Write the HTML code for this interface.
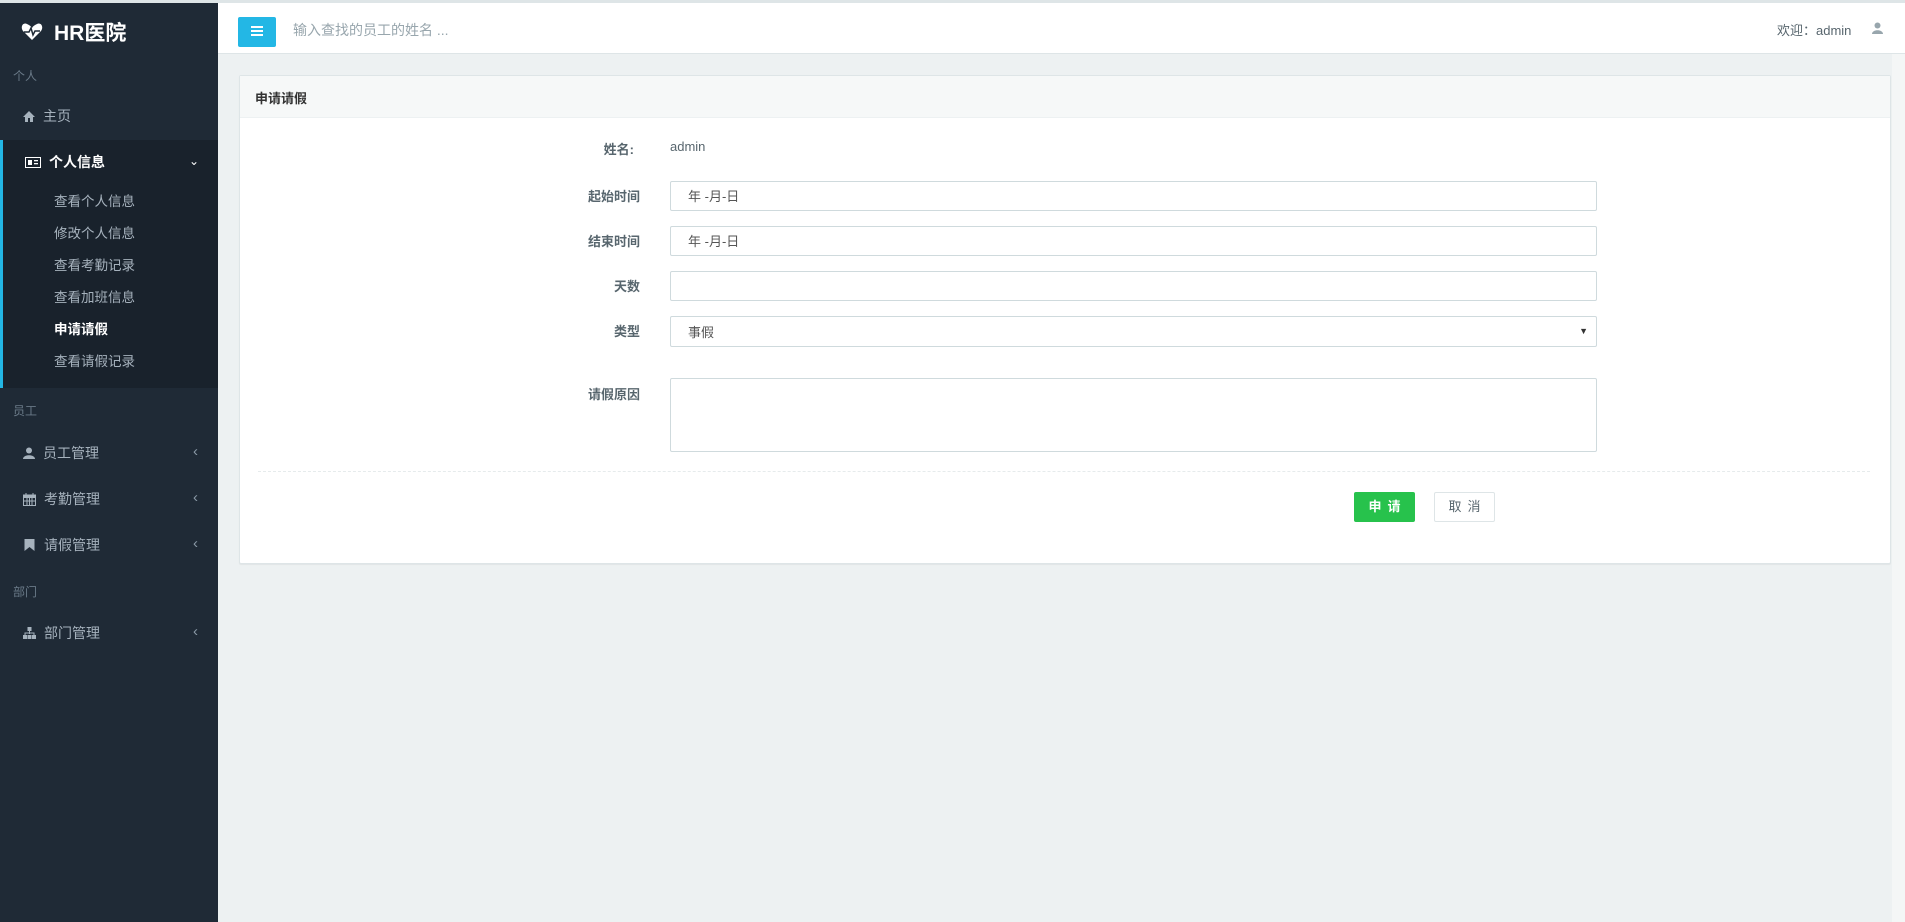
<!DOCTYPE html>
<html><head><meta charset="utf-8"><style>
*{box-sizing:border-box;margin:0;padding:0}
body{width:1905px;height:922px;overflow:hidden;background:#edf1f2;font-family:"Liberation Sans","Noto Sans CJK SC",sans-serif;font-size:13px;color:#58666e;position:relative}
.abs{position:absolute}
#topline{left:0;top:0;width:1905px;height:3px;background:#dee5e7}
#side{left:0;top:3px;width:218px;height:919px;background:#1f2a36}
#hdr{left:218px;top:3px;width:1687px;height:51px;background:#fff;border-bottom:1px solid #dee5e7}
.nl{left:13px;font-size:12px;color:#6a7a88}
.it{left:23px;color:#a6b2bd;font-size:14px;display:flex;align-items:center}
.it svg{margin-right:8px}
.chev{left:193px;color:#8a99a6;font-size:15px}
.sub{left:54px;color:#a6b2bd;font-size:13.5px}
.lbl{width:200px;text-align:right;left:440px;font-size:13px;color:#58666e}
.inp{left:670px;width:927px;height:30px;border:1px solid #cfdadd;background:#fff;border-radius:2px;font-size:13px;color:#555;padding:4px 17px}
</style></head><body>
<div class="abs" id="topline"></div>
<div class="abs" id="side">
 <div class="abs" style="left:21px;top:14px;display:flex;align-items:center;color:#fff;font-weight:bold;font-size:21px">
  <svg width="22" height="18" viewBox="0 0 22 18"><path d="M11 17 L2 8 C-1 4 2 -1 6 1 C8 2 10 3 11 5 C12 3 14 2 16 1 C20 -1 23 4 20 8 Z" fill="#fff"/><path d="M3 9 L8 9 L10 5 L12 12 L14 8 L19 8" stroke="#1f2a36" stroke-width="1.5" fill="none"/></svg>
  <span style="margin-left:11px">HR医院</span></div>
 <div class="abs nl" style="top:64px">个人</div>
 <div class="abs it" style="top:103px"><svg width="12" height="11" viewBox="0 0 12 11"><path d="M6 0 L12 6 L10 6 L10 11 L7 11 L7 7 L5 7 L5 11 L2 11 L2 6 L0 6Z" fill="#a6b2bd"/></svg>主页</div>
 <div class="abs" style="left:0;top:137px;width:218px;height:248px;background:#19222c;border-left:3px solid #23b7e5"></div>
 <div class="abs it" style="top:149px;left:25px;color:#fff;font-weight:bold"><svg width="16" height="11" viewBox="0 0 16 11"><rect x="0.5" y="0.5" width="15" height="10" fill="none" stroke="#fff"/><rect x="3" y="3" width="4" height="5" fill="#fff"/><rect x="9" y="3" width="4" height="1.3" fill="#fff"/><rect x="9" y="6" width="4" height="1.3" fill="#fff"/></svg>个人信息</div>
 <div class="abs" style="left:189px;top:151px;color:#fff;font-size:12px">&#8964;</div>
 <div class="abs sub" style="top:187px">查看个人信息</div>
 <div class="abs sub" style="top:219px">修改个人信息</div>
 <div class="abs sub" style="top:251px">查看考勤记录</div>
 <div class="abs sub" style="top:283px">查看加班信息</div>
 <div class="abs sub" style="top:315px;color:#fff;font-weight:bold">申请请假</div>
 <div class="abs sub" style="top:347px">查看请假记录</div>
 <div class="abs nl" style="top:399px">员工</div>
 <div class="abs it" style="top:440px"><svg width="12" height="12" viewBox="0 0 12 12"><circle cx="6" cy="3.5" r="3" fill="#a6b2bd"/><path d="M0 12 C0 7 12 7 12 12Z" fill="#a6b2bd"/></svg>员工管理</div>
 <div class="abs chev" style="top:440px">&#8249;</div>
 <div class="abs it" style="top:486px"><svg width="13" height="13" viewBox="0 0 13 13"><rect x="0.5" y="2" width="12" height="10.5" fill="none" stroke="#a6b2bd"/><rect x="0.5" y="2" width="12" height="3" fill="#a6b2bd"/><path d="M3 0v3M10 0v3M4 5v7M6.5 5v7M9 5v7M1 8h11" stroke="#a6b2bd"/></svg>考勤管理</div>
 <div class="abs chev" style="top:486px">&#8249;</div>
 <div class="abs it" style="top:532px"><svg width="13" height="12" viewBox="0 0 10 12"><path d="M0 0H10V12L5 8L0 12Z" fill="#a6b2bd"/></svg>请假管理</div>
 <div class="abs chev" style="top:532px">&#8249;</div>
 <div class="abs nl" style="top:580px">部门</div>
 <div class="abs it" style="top:620px"><svg width="13" height="12" viewBox="0 0 13 12"><rect x="4.5" y="0" width="4" height="4" fill="#a6b2bd"/><path d="M6.5 4v3M2 8V6h9v2" stroke="#a6b2bd" fill="none"/><rect x="0" y="8" width="4" height="4" fill="#a6b2bd"/><rect x="4.5" y="8" width="4" height="4" fill="#a6b2bd"/><rect x="9" y="8" width="4" height="4" fill="#a6b2bd"/></svg>部门管理</div>
 <div class="abs chev" style="top:620px">&#8249;</div>
</div>
<div class="abs" id="hdr">
 <div class="abs" style="left:20px;top:14px;width:38px;height:30px;background:#23b7e5;border-radius:2px"><div class="abs" style="left:13px;top:9px;width:12px;height:2px;background:#fff;box-shadow:0 4px 0 #fff,0 8px 0 #fff"></div></div>
 <div class="abs" style="left:75px;top:17px;font-size:14px;color:#98a6ad">输入查找的员工的姓名 ...</div>
 <div class="abs" style="left:1559px;top:17px;font-size:13px;color:#58666e">欢迎：admin</div>
 <svg class="abs" style="left:1654px;top:19px" width="11" height="12" viewBox="0 0 11 12"><circle cx="5.5" cy="3.5" r="3" fill="#98a6ad"/><path d="M0 12 C0 7 11 7 11 12Z" fill="#98a6ad"/></svg>
</div>
<div class="abs" style="left:1892px;top:54px;width:13px;height:868px;background:#f4f6f6"></div>
<div class="abs" style="left:239px;top:75px;width:1652px;height:489px;background:#fff;border:1px solid #dee5e7;border-radius:2px;box-shadow:0 1px 1px rgba(0,0,0,.05)">
 <div style="height:42px;background:#f6f8f8;border-bottom:1px solid #edf1f2;padding:12px 15px;font-weight:bold;color:#333;font-size:13px">申请请假</div>
</div>
<div class="abs lbl" style="top:139px;font-weight:bold;width:194px">姓名:</div>
<div class="abs" style="left:670px;top:139px;color:#58666e">admin</div>
<div class="abs lbl" style="top:186px;font-weight:bold">起始时间</div>
<div class="abs inp" style="top:181px">年 -月-日</div>
<div class="abs lbl" style="top:231px;font-weight:bold">结束时间</div>
<div class="abs inp" style="top:226px">年 -月-日</div>
<div class="abs lbl" style="top:276px;font-weight:bold">天数</div>
<div class="abs inp" style="top:271px"></div>
<div class="abs lbl" style="top:321px;font-weight:bold">类型</div>
<div class="abs inp" style="top:316px;height:31px;padding-top:5px">事假<span style="position:absolute;right:8px;top:9px;font-size:9px;color:#333">&#9660;</span></div>
<div class="abs lbl" style="top:384px;font-weight:bold">请假原因</div>
<div class="abs inp" style="top:378px;height:74px"></div>
<div class="abs" style="left:258px;top:471px;width:1612px;border-top:1px dashed #e6ebec"></div>
<div class="abs" style="left:1354px;top:492px;width:61px;height:30px;background:#27c24c;border-radius:2px;color:#fff;text-align:center;line-height:30px;font-weight:bold;letter-spacing:6px;padding-left:6px">申请</div>
<div class="abs" style="left:1434px;top:492px;width:61px;height:30px;background:#fff;border:1px solid #dee5e7;border-radius:2px;color:#58666e;text-align:center;line-height:28px;letter-spacing:6px;padding-left:6px">取消</div>
</body></html>
